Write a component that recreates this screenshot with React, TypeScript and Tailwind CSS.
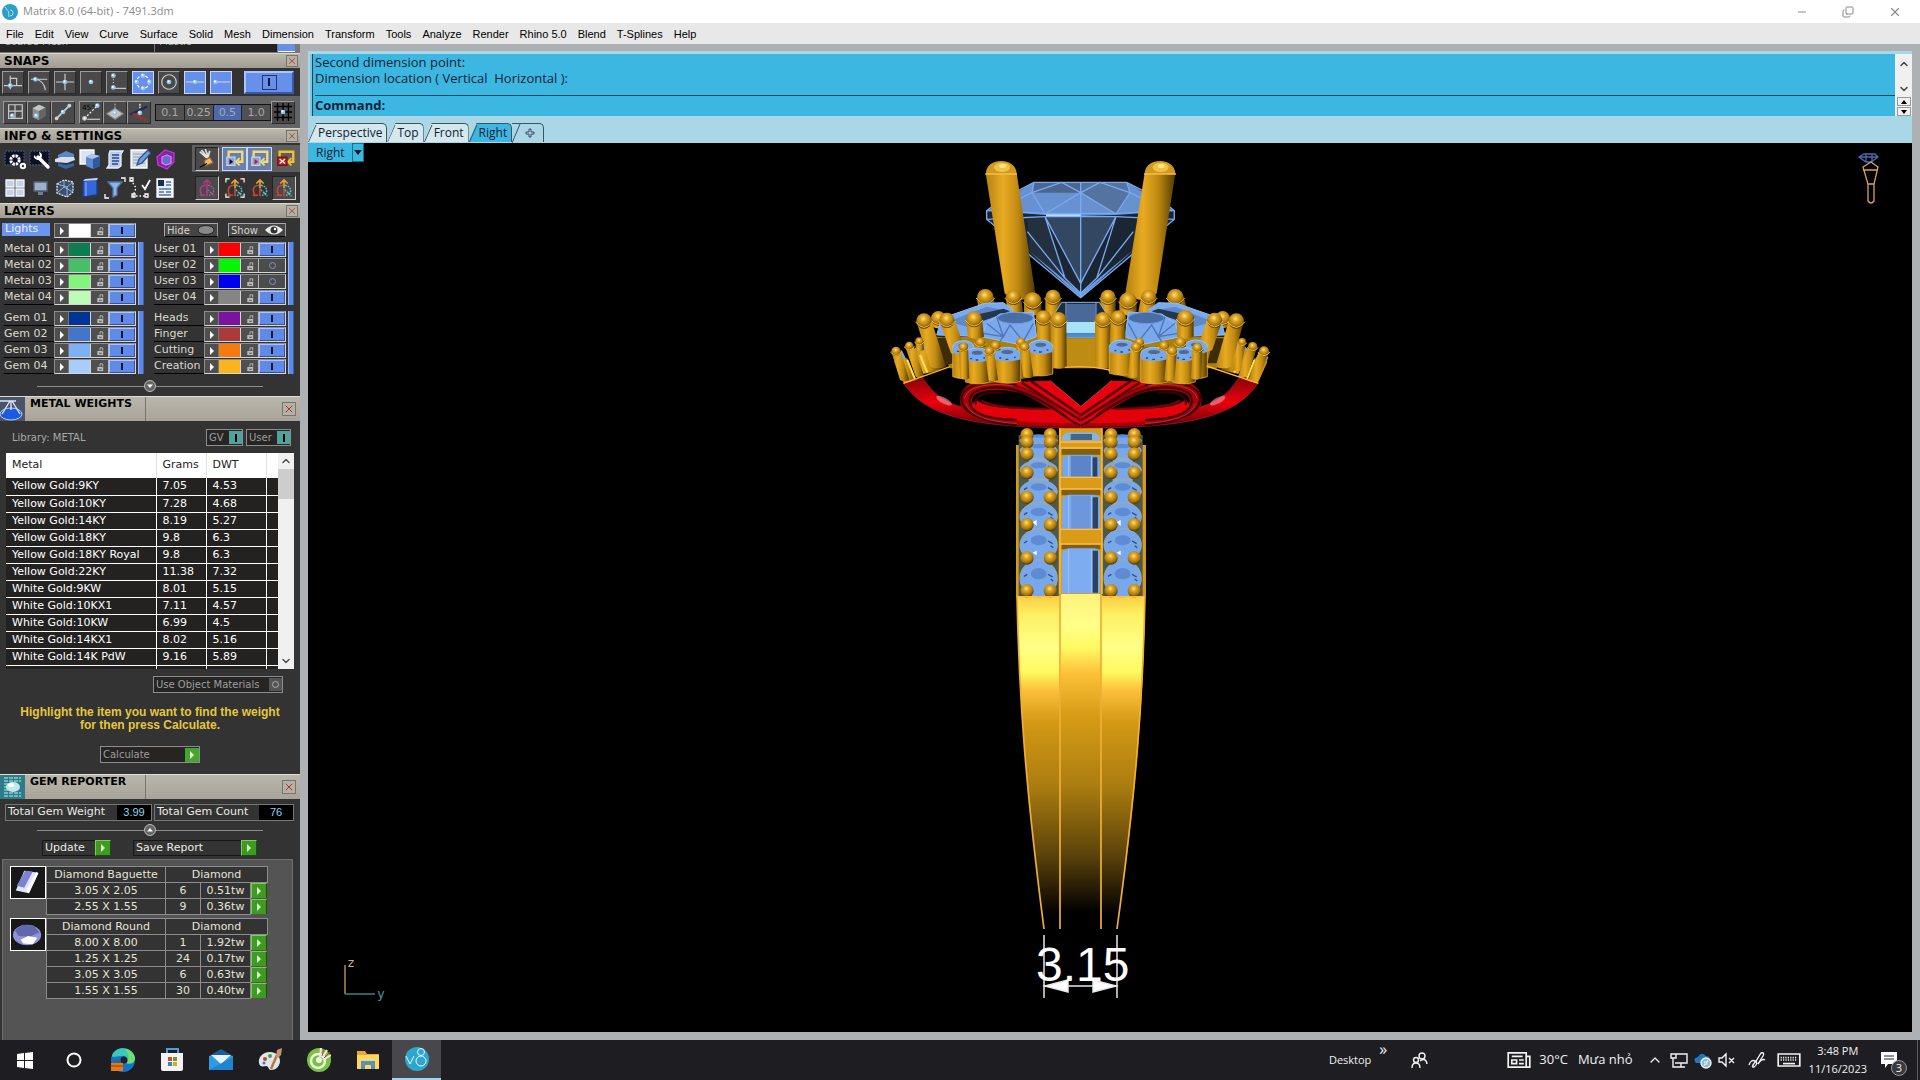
import type { ReactNode } from 'react';
import clsx from 'clsx';
import { ChevronDown, ChevronUp, Copy, Minus, X } from 'lucide-react';

const MENUS = ['File', 'Edit', 'View', 'Curve', 'Surface', 'Solid', 'Mesh', 'Dimension', 'Transform', 'Tools', 'Analyze', 'Render', 'Rhino 5.0', 'Blend', 'T-Splines', 'Help'];

const METALS = [
  ['Yellow Gold:9KY', '7.05', '4.53'],
  ['Yellow Gold:10KY', '7.28', '4.68'],
  ['Yellow Gold:14KY', '8.19', '5.27'],
  ['Yellow Gold:18KY', '9.8', '6.3'],
  ['Yellow Gold:18KY Royal', '9.8', '6.3'],
  ['Yellow Gold:22KY', '11.38', '7.32'],
  ['White Gold:9KW', '8.01', '5.15'],
  ['White Gold:10KX1', '7.11', '4.57'],
  ['White Gold:10KW', '6.99', '4.5'],
  ['White Gold:14KX1', '8.02', '5.16'],
  ['White Gold:14K PdW', '9.16', '5.89'],
  ['White Gold:14KW', '7.41', '4.77'],
];

type Layer = { name: string; color: string; on?: boolean };

const LAYER_GROUPS: Layer[][] = [
  [
    { name: 'Metal 01', color: 'bg-[#0b7d50]' },
    { name: 'Metal 02', color: 'bg-[#45c069]' },
    { name: 'Metal 03', color: 'bg-[#83f57c]' },
    { name: 'Metal 04', color: 'bg-[#bdfcb8]' },
  ],
  [
    { name: 'User 01', color: 'bg-[#fb0000]' },
    { name: 'User 02', color: 'bg-[#05f505]', on: false },
    { name: 'User 03', color: 'bg-[#0000ee]', on: false },
    { name: 'User 04', color: 'bg-[#858585]' },
  ],
  [
    { name: 'Gem 01', color: 'bg-[#003595]' },
    { name: 'Gem 02', color: 'bg-[#4276cc]' },
    { name: 'Gem 03', color: 'bg-[#7db0f5]' },
    { name: 'Gem 04', color: 'bg-[#aaccfa]' },
  ],
  [
    { name: 'Heads', color: 'bg-[#7a14a0]' },
    { name: 'Finger', color: 'bg-[#ab3b3b]' },
    { name: 'Cutting', color: 'bg-[#f57a10]' },
    { name: 'Creation', color: 'bg-[#fab41c]' },
  ],
];

const GEMS = [
  { name: 'Diamond Baguette', shape: 'baguette', rows: [['3.05 X 2.05', '6', '0.51tw'], ['2.55 X 1.55', '9', '0.36tw']] },
  { name: 'Diamond Round', shape: 'round', rows: [['8.00 X 8.00', '1', '1.92tw'], ['1.25 X 1.25', '24', '0.17tw'], ['3.05 X 3.05', '6', '0.63tw'], ['1.55 X 1.55', '30', '0.40tw']] },
];

const Dot = ({ x, y }: { x: number; y: number }) => (
  <g>
    <circle cx={x} cy={y} r="2.6" fill="#8fc3ea" stroke="none" />
    <circle cx={x - 0.6} cy={y - 0.6} r="1.2" fill="#f2faff" stroke="none" />
  </g>
);

function Icon({ children, size = 'h-5 w-5' }: { children: ReactNode; size?: string }) {
  return (
    <svg viewBox="0 0 22 22" className={clsx('shrink-0', size)} fill="none" stroke="#c9ccce" strokeWidth="1.3" aria-hidden="true">
      {children}
    </svg>
  );
}

const SNAP_TOP: { name: string; on?: boolean; icon: ReactNode }[] = [
  { name: 'Perp', icon: <><path d="M1 15H21M8 4V19M8 7h7v8" /><Dot x={8} y={15} /></> },
  { name: 'Tan', icon: <><path d="M2 8H20M7 8C14 9 17 13 18 20" /><Dot x={7} y={8} /></> },
  { name: 'Int', icon: <><path d="M1 11H21M11 2V20" /><Dot x={11} y={11} /></> },
  { name: 'Point', icon: <Dot x={11} y={11} /> },
  { name: 'Near', icon: <><path d="M5 18H21" /><Dot x={7} y={4} /><path d="M7 8v6" strokeDasharray="1 2" /><Dot x={7} y={17} /></> },
  { name: 'Quad', on: true, icon: <><circle cx="11" cy="11" r="7" stroke="#fff" strokeDasharray="3 2" /><Dot x={11} y={4} /><Dot x={4} y={11} /><Dot x={18} y={11} /><Dot x={11} y={18} /></> },
  { name: 'Cen', icon: <><circle cx="11" cy="11" r="8" /><Dot x={11} y={11} /></> },
  { name: 'Mid', on: true, icon: <><path d="M1 11H21" /><Dot x={11} y={11} /></> },
  { name: 'End', on: true, icon: <><path d="M6 11H21" /><Dot x={5} y={11} /></> },
];

const SNAP_LEFT: { name: string; icon: ReactNode }[] = [
  { name: 'Grid', icon: <><path d="M4 3h15v15H4zM11 3v15M4 10h15" /><Dot x={8} y={15} /></> },
  { name: 'Project', icon: <><path d="M4 7l7-4 7 3v9l-7 5-7-3z" fill="#8c8f8f" stroke="none" /><path d="M4 7l7-4 7 3-7 4z" fill="#c4c6c6" stroke="none" /><path d="M11 10l7-4v9l-7 5z" fill="#666" stroke="none" /><Dot x={8} y={15} /></> },
  { name: 'Line', icon: <><path d="M4 18L18 4" strokeWidth="2" /><circle cx="4" cy="18" r="1.5" fill="#ddd" /><circle cx="18" cy="4" r="1.5" fill="#ddd" /><Dot x={11} y={11} /></> },
];

const SNAP_MID: { name: string; icon: ReactNode }[] = [
  { name: '45 degrees', icon: <><path d="M4 18L18 4" strokeDasharray="2 2" stroke="#fff" /><path d="M7 19H21" /><circle cx="4" cy="18" r="2" fill="#eee" /><Dot x={18} y={4} /><text x="1" y="9" fontSize="8" fill="#000" stroke="none" fontFamily="DejaVu Sans">45°</text></> },
  { name: 'Planar', icon: <><path d="M2 13l9-6 9 6-9 6z" fill="#c4c6c6" stroke="#888" /><path d="M11 7v-6" strokeDasharray="1 1" /><Dot x={11} y={12} /></> },
  { name: 'Gumball', icon: <><path d="M12 13V2" stroke="#fff" strokeDasharray="2 1" /><path d="M1 14L20 5" stroke="#1c2b58" strokeWidth="2.5" /><path d="M4 13l15 7" stroke="#a32d2d" strokeWidth="2.5" /><Dot x={12} y={12} /></> },
];

const INFO_A: { name: string; icon: ReactNode }[] = [
  { name: 'Options', icon: <><path d="M1 3h19v14H1z" fill="#0c1020" stroke="#3a4f78" strokeDasharray="2 1" /><circle cx="11" cy="12" r="4.2" stroke="#fff" strokeWidth="3" strokeDasharray="2.4 .9" /><circle cx="19" cy="18" r="2.2" stroke="#fff" strokeWidth="2" /></> },
  { name: 'Tools', icon: <><path d="M1 3h19v14H1z" fill="#0c1020" stroke="#3a4f78" strokeDasharray="2 1" /><path d="M9 9L19 19" stroke="#fff" strokeWidth="3.4" strokeLinecap="round" /><path d="M5 7a4 4 0 1 0 5-3l1 4-3 2z" fill="#fff" stroke="none" /></> },
  { name: 'Slice', icon: <><path d="M4 7l8-4 8 3v4l-8 3-8-3z" fill="#5c85c4" stroke="none" /><path d="M1 11l6-2h13l1 3-8 3-12-1z" fill="#d4e0f0" stroke="none" /><path d="M4 15l8 2 8-2v3l-8 3-8-3z" fill="#3a62a8" stroke="none" /></> },
  { name: 'Box', icon: <><path d="M1 2h14v14H1z" fill="#dde4f0" stroke="#fff" /><path d="M7 9l6-3 8 2v10l-7 3-7-3z" fill="#5b8ad0" stroke="none" /><path d="M7 9l6-3 8 2-7 3z" fill="#a9c8f0" stroke="none" /><path d="M14 11l7-3v10l-7 3z" fill="#2f5aa0" stroke="none" /></> },
  { name: 'Script', icon: <><path d="M6 3h13l-2 3v12l-3 2H3l2-3V6z" fill="#b8cdec" stroke="#e8f0fc" /><path d="M8 7h7M8 10h7M8 13h7M8 16h6" stroke="#274a86" /></> },
  { name: 'Notes', icon: <><path d="M2 2h16v18H2z" fill="#d6deea" stroke="#fff" /><path d="M4 6h12M4 9h12M4 12h12M4 15h12" stroke="#7d8fae" strokeWidth=".8" /><path d="M8 17l2-6 9-9 3 3-9 10z" fill="#6c9ddd" stroke="#2d4f85" /></> },
  { name: 'Render cube', icon: <><path d="M3 9l8-7 9 3v9l-7 7-9-4z" fill="#8a1ea6" stroke="#b83ccf" /><path d="M8 9l5-2 4 2v6l-5 2-4-2z" fill="#6a6ad0" stroke="#c58ae6" /></> },
];

const INFO_B: { name: string; icon: ReactNode }[] = [
  { name: 'Viewports', icon: <><path d="M2 3h8v7H2zM12 3h8v7h-8zM2 12h8v7H2zM12 12h8v7h-8z" fill="#c4d2e8" stroke="#f3f6fb" /></> },
  { name: 'Monitor', icon: <><path d="M5 5h13v9H5z" fill="#9eb0c8" stroke="#52627c" /><path d="M9 15h5v3H9z" fill="#6f7f98" stroke="none" /></> },
  { name: 'Mesh cube', icon: <><path d="M3 7l7-4 9 2v10l-6 5-10-4z" fill="#3b506e" stroke="#dceaff" strokeDasharray="2 1" /><path d="M3 7l10 3 6-5M13 10v10M3 16l7-6 9 5M10 3v7" stroke="#a8c8f0" strokeWidth=".8" /></> },
  { name: 'Library', icon: <><path d="M4 4l14-2v16L4 20z" fill="#3467d8" stroke="#1c3b90" /><path d="M4 4l2-2 13-1-1 2z" fill="#cdd9f5" stroke="none" /><path d="M7 5v14" stroke="#7ea2f3" /></> },
  { name: 'Filter', icon: <><path d="M4 5h14l-5 6v7l-4 2v-9z" fill="#8db4e8" stroke="#4e76ac" /><path d="M17 1h4v4M1 17v4h4" stroke="#fff" /></> },
  { name: 'Check', icon: <><path d="M2 3l5 8-3 8h12" stroke="#fff" strokeDasharray="1.5 2" /><path d="M1 1h3v3H1zM3 17h3v3H3zM16 17h3v3h-3z" stroke="#fff" /><path d="M13 8l3 4 5-9" stroke="#fff" strokeWidth="1.8" /></> },
  { name: 'Report', icon: <><path d="M3 2h16v18H3z" fill="#e8eef8" stroke="#fff" /><path d="M4 3h6v6H4z" fill="#1a2c50" stroke="none" /><path d="M12 5h5M12 8h5M5 12h12M5 15h5M12 15h5M5 18h12" stroke="#5473a8" strokeWidth="1.6" /></> },
];

const TREE_ICON = (a: string, b: string, c: string) => (
  <>
    <path d="M11 11V3M7 6l4-4 4 4" stroke={a} strokeWidth="1.8" />
    <path d="M10 8C3 8 2 14 6 20M3 19h6M11 11v9" stroke={b} strokeWidth="1.8" />
    <path d="M12 8c7 1 8 7 4 11M12 13l7 7M19 14l-6 6" stroke={c} strokeWidth="1.5" strokeDasharray="2 1" />
  </>
);
const FRAME_ICON = (color: string, fill: string) => (
  <>
    <path d="M4 9V3h15v11h-5" stroke="#f0df70" strokeWidth="2.6" />
    <path d="M16 10l-4 4 4 4" stroke="#f0df70" strokeWidth="2" />
    <path d="M2 9h9v9H2z" fill={fill} stroke="#c9d4ee" />
    <path d="M5 11l4 3-4 3z" fill={color} stroke="none" />
  </>
);

function Close({ small }: { small?: boolean }) {
  return (
    <button aria-label="Close panel" className={clsx('flex items-center justify-center border border-[#77746c] bg-[#b5b1a7]', small ? 'h-3 w-3' : 'h-[14px] w-[14px]')}>
      <X className="h-3 w-3 text-[#a83a30]" strokeWidth={2} />
    </button>
  );
}

function Header({ title }: { title: string }) {
  return (
    <header className="flex h-[15px] items-center justify-between border-t border-[#d8d5cb] bg-linear-to-b from-[#bcb8ad] to-[#a09c91] pr-0.5 pl-1">
      <h2 className="text-[12px] leading-[14px] font-bold text-black">{title}</h2>
      <Close small />
    </header>
  );
}

function BigHeader({ title, children }: { title: string; children: ReactNode }) {
  return (
    <header className="flex h-[25px] items-stretch border-t border-[#e0ddd5] bg-linear-to-b from-[#b9b6ac] to-[#a8a49a]">
      {children}
      <h2 className="w-[121px] border-r border-[#77746c] pl-[5px] text-[11px] leading-[13px] font-bold text-black">{title}</h2>
      <div className="flex flex-1 items-center justify-end pr-1"><Close /></div>
    </header>
  );
}

function SnapButton({ name, on, children, wide }: { name: string; on?: boolean; children: ReactNode; wide?: boolean }) {
  return (
    <button
      aria-label={name}
      aria-pressed={!!on}
      className={clsx(
        'flex h-[23px] items-center justify-center border',
        wide ? 'w-[24px]' : 'w-[22px]',
        on ? 'border-[#c4d8ff] bg-[#6690ea]' : 'border-t-[#9b9b9b] border-r-[#2a2a2a] border-b-[#2a2a2a] border-l-[#9b9b9b] bg-[#4a4a4a]'
      )}
    >
      {children}
    </button>
  );
}

function PlayGreen() {
  return (
    <span className="flex h-4 w-4 shrink-0 items-center justify-center border border-t-[#7fc866] border-r-[#1b4d0c] border-b-[#1b4d0c] border-l-[#7fc866] bg-[#3f9a22]">
      <svg viewBox="0 0 8 8" className="h-2 w-2" aria-hidden="true"><path d="M2 0l4 4-4 4z" fill="#d8ffc8" /></svg>
    </span>
  );
}

function LayerControls({ layer }: { layer: Layer }) {
  const on = layer.on !== false;
  return (
    <div className="flex h-[15px] w-[82px] border border-t-[#8d8d8d] border-r-[#d5d5d5] border-b-[#d5d5d5] border-l-[#8d8d8d] bg-[#4f4f4f]">
      <button aria-label={`Expand ${layer.name}`} className="flex w-[14px] items-center justify-center border-r border-[#777]">
        <svg viewBox="0 0 6 8" className="h-2 w-1.5" aria-hidden="true"><path d="M1 0l4 4-4 4z" fill="#fff" /></svg>
      </button>
      <button aria-label={`${layer.name} colour`} className={clsx('w-[22px] border-r border-[#d5d5d5]', layer.color)} />
      <button aria-label={`Lock ${layer.name}`} className="flex w-[18px] items-center justify-center border-r border-[#b5b5b5]">
        <svg viewBox="0 0 10 11" className="h-2.5 w-2.5" aria-hidden="true">
          <path d="M2 5.500h6.500v4.500H2z" fill="#bcbcbc" />
          <path d="M5 5V2h3v3" fill="none" stroke="#bcbcbc" />
          <path d="M4 8h3" stroke="#444" />
        </svg>
      </button>
      <button aria-label={`Show ${layer.name}`} aria-pressed={on} className={clsx('flex flex-1 items-center justify-center', on ? 'border border-t-[#aac4ff] border-r-[#37539c] border-b-[#37539c] border-l-[#aac4ff] bg-[#6189e6]' : 'bg-[#4c4c4c]')}>
        {on ? <span className="h-[7px] w-0.5 bg-[#0d1733]" /> : <span className="h-[7px] w-[7px] rounded-full border border-[#7c95c4]" />}
      </button>
    </div>
  );
}

function LayerGroup({ layers }: { layers: Layer[] }) {
  return (
    <div className="flex w-[142px]">
      <ul className="flex flex-col gap-px">
        {layers.map((layer) => (
          <li key={layer.name} className="flex">
            <span className="h-[15px] w-[50px] border-b border-black text-[11px] leading-[13px] whitespace-nowrap text-[#dcd9cf]">{layer.name}</span>
            <LayerControls layer={layer} />
          </li>
        ))}
      </ul>
      <div className="ml-0.5 w-1.5 border-r border-l border-r-[#3d5fb4] border-l-[#9bb8f6] bg-[#5f87e4]" />
    </div>
  );
}

function Fold({ up }: { up?: boolean }) {
  return (
    <div className="flex items-center px-[37px]">
      <div className="h-px flex-1 bg-[#8d8d8d]" />
      <button aria-label={up ? 'Collapse' : 'Expand'} className="flex h-3 w-3 items-center justify-center rounded-full border border-[#bbb] bg-[#666]">
        <svg viewBox="0 0 8 8" className="h-2 w-2" aria-hidden="true"><path d={up ? 'M1 5.500L4 2l3 3.500z' : 'M1 2.500L4 6l3-3.500z'} fill="#fff" /></svg>
      </button>
      <div className="h-px flex-1 bg-[#8d8d8d]" />
    </div>
  );
}

function IconRow({ items }: { items: { name: string; icon: ReactNode }[] }) {
  return (
    <div className="flex w-[192px] gap-px pl-[3px]">
      {items.map((item) => (
        <button key={item.name} aria-label={item.name} className="flex h-6 w-6 items-center justify-center">
          <Icon size="h-[22px] w-[22px]">{item.icon}</Icon>
        </button>
      ))}
    </div>
  );
}

function InfoSettings() {
  const framed = 'flex h-6 w-6 items-center justify-center border border-t-[#222] border-r-[#ccc] border-b-[#ccc] border-l-[#222] bg-[#4a4a4a]';
  const lit = 'flex h-6 w-[25px] items-center justify-center border border-[#c4d8ff] bg-[#6a7fae]';
  return (
    <div className="flex flex-col gap-[2px] bg-[#333] pt-[2px] pb-[2px]">
      <div className="flex items-center">
        <IconRow items={INFO_A} />
        <div className="flex h-[27px] flex-1 items-center bg-[#5e5e5e] pl-[3px]">
          <button aria-label="Clean" className={framed}>
            <Icon><path d="M3 3l8 7M5 1l7 9M9 0l4 10M14 2l-2 8" stroke="#e4e4e4" strokeWidth="1.8" /><path d="M8 13l6-4 4 6-9 4z" fill="#e8b873" stroke="#8c5d28" /><path d="M3 20l8-4" stroke="#000" /></Icon>
          </button>
          <button aria-label="Play frame" className={clsx(lit, 'ml-[3px]')}><Icon>{FRAME_ICON('#111', '#8fa3d0')}</Icon></button>
          <button aria-label="Record frame" className={lit}><Icon>{FRAME_ICON('#c02020', '#8fa3d0')}</Icon></button>
          <button aria-label="Delete frame" className="ml-0.5 flex h-6 w-[23px] items-center justify-center">
            <Icon><path d="M4 9V3h15v11h-5" stroke="#f0c030" strokeWidth="2.6" /><path d="M17 10l-4 4 4 4" stroke="#f0c030" strokeWidth="2" /><path d="M2 9h10v9H2z" fill="#b82020" stroke="#701010" /><path d="M4 11l6 5M10 11l-6 5" stroke="#fff" /></Icon>
          </button>
        </div>
      </div>
      <div className="flex items-center">
        <IconRow items={INFO_B} />
        <div className="flex h-[27px] flex-1 items-center pl-[3px]">
          <button aria-label="Builder one" className={framed}><Icon>{TREE_ICON('#a83a80', '#b03a88', '#a55a90')}</Icon></button>
          <button aria-label="Builder two" className="ml-[3px] flex h-6 w-[25px] items-center justify-center"><Icon>{TREE_ICON('#e8a23c', '#cc4236', '#58c0c8')}<path d="M1 5V1h4M17 1h4v4M1 17v4h4M17 21h4v-4" stroke="#fff" /></Icon></button>
          <button aria-label="Builder three" className="flex h-6 w-[25px] items-center justify-center"><Icon>{TREE_ICON('#e8a23c', '#cc4236', '#58c0c8')}</Icon></button>
          <button aria-label="Builder four" className={framed}><Icon>{TREE_ICON('#e8a23c', '#cc4236', '#58c0c8')}</Icon></button>
        </div>
      </div>
    </div>
  );
}

function MetalWeights() {
  const box = 'flex h-[17px] items-center border border-[#8d8d8d] bg-[#262524] text-[10px] text-[#9d9d9d]';
  return (
    <section>
      <BigHeader title="METAL WEIGHTS">
        <svg viewBox="0 0 25 24" className="w-[25px] bg-[#2a3244]" aria-hidden="true">
          <path d="M0 0h25v24H0z" fill="#4a5468" />
          <ellipse cx="11" cy="17" rx="11" ry="6" fill="#1c5ae0" stroke="#b7cdf8" />
          <path d="M0 4l16 0M10 4L2 17M12 4l8 13M11 4v9" stroke="#dbe6fa" strokeWidth="1.4" />
        </svg>
      </BigHeader>
      <div className="flex items-center gap-[3px] pt-2 pr-[9px] pl-3">
        <p className="flex-1 text-[10px] leading-[17px] text-[#a9a9a9]">Library: METAL</p>
        <button className={clsx(box, 'w-[37px] justify-between pl-0.5')}>GV<span className="flex h-[13px] w-[13px] items-center justify-center bg-[#4fa39c]"><i className="h-2 w-0.5 bg-black" /></span></button>
        <button className={clsx(box, 'w-[45px] justify-between pl-0.5')}>User<span className="flex h-[13px] w-[13px] items-center justify-center bg-[#4fa39c]"><i className="h-2 w-0.5 bg-black" /></span></button>
      </div>
      <div className="mx-1.5 mt-[7px] flex h-[216px] overflow-hidden">
        <table className="w-[272px] table-fixed border-collapse self-start text-left text-[11px] text-white">
          <thead>
            <tr className="h-[25px] bg-white text-[#222]">
              <th className="w-[150px] border-r border-[#e2e2e2] pl-1.5 font-normal">Metal</th>
              <th className="w-[50px] border-r border-[#e2e2e2] pl-1.5 font-normal">Grams</th>
              <th className="w-[60px] border-r border-[#e2e2e2] pl-1.5 font-normal">DWT</th>
              <th />
            </tr>
          </thead>
          <tbody>
            {METALS.map((row) => (
              <tr key={row[0]} className="h-[17px] border-b border-white bg-[#232221]">
                {row.map((cell, i) => (
                  <td key={i} className="border-r border-white pl-1.5 leading-4 whitespace-nowrap">{cell}</td>
                ))}
                <td />
              </tr>
            ))}
          </tbody>
        </table>
        <div className="flex flex-1 flex-col items-center bg-[#f0f0f0]">
          <ChevronUp className="my-0.5 h-3 w-3 text-[#505050]" strokeWidth={3} />
          <div className="h-[30px] w-full bg-[#cdcdcd]" />
          <ChevronDown className="mt-auto mb-0.5 h-3 w-3 text-[#505050]" strokeWidth={3} />
        </div>
      </div>
      <div className="flex flex-col">
        <button className={clsx(box, 'mt-[7px] mr-[17px] w-[130px] justify-between self-end pl-0.5')}>
          Use Object Materials
          <span className="flex h-[13px] w-[13px] items-center justify-center bg-[#555]"><i className="h-[7px] w-[7px] rounded-full border border-[#aaa]" /></span>
        </button>
        <p className="mt-[13px] text-center font-['Liberation_Sans'] text-[12px] leading-[13px] font-bold text-[#e6c73c]">
          Highlight the item you want to find the weight<br />for then press Calculate.
        </p>
        <button className={clsx(box, 'mt-[14px] w-[100px] justify-between self-center pl-0.5')}>
          Calculate
          <span className="flex h-[14px] w-[14px] items-center justify-center bg-[#46a62c]"><svg viewBox="0 0 8 8" className="h-2 w-2" aria-hidden="true"><path d="M2 0l4 4-4 4z" fill="#e8ffe0" /></svg></span>
        </button>
      </div>
    </section>
  );
}

function GemReporter() {
  const cell = 'border border-[#8d8d8d] bg-[#333] leading-[15px]';
  const total = "ml-auto h-full w-[34px] bg-black text-center font-['Liberation_Sans'] leading-[15px] text-[#8fd6ee]";
  return (
    <section className="mt-[11px] flex flex-1 flex-col">
      <BigHeader title="GEM REPORTER">
        <svg viewBox="0 0 25 24" className="w-[25px] bg-[#2f7b88]" aria-hidden="true">
          <path d="M4 3h17M4 6h17M4 18h17M4 21h17M4 9h4M4 12h3M4 15h4" stroke="#b9f2f0" strokeDasharray="4 1" />
          <ellipse cx="13" cy="12" rx="7" ry="5" fill="#bfe9ec" />
          <ellipse cx="11" cy="10" rx="3" ry="2" fill="#fff" />
        </svg>
      </BigHeader>
      <div className="mt-[5px] flex justify-between pr-1.5 pl-[5px] text-[11px] text-[#eceae2]">
        <p className="flex h-[17px] w-[147px] items-center border border-[#777] pl-0.5 whitespace-nowrap">Total Gem Weight<output className={total}>3.99</output></p>
        <p className="flex h-[17px] w-[140px] items-center border border-[#777] pl-0.5 whitespace-nowrap">Total Gem Count<output className={total}>76</output></p>
      </div>
      <div className="mt-[3px]"><Fold up /></div>
      <div className="mt-1 flex gap-[22px] pl-[42px] text-[11px] text-[#eceae2]">
        <button className="flex h-4 w-[69px] items-center justify-between border border-r-0 border-[#161616] pl-0.5">Update<PlayGreen /></button>
        <button className="flex h-4 w-[124px] items-center justify-between border border-r-0 border-[#161616] pl-0.5">Save Report<PlayGreen /></button>
      </div>
      <div className="mt-[3px] mr-[7px] ml-0.5 flex flex-1 flex-col gap-[3px] border border-b-0 border-[#6e6e6e] bg-[#545454] px-[7px] pt-[6px]">
        {GEMS.map((gem) => (
          <div key={gem.name} className="flex items-start">
            <svg viewBox="0 0 36 33" className="h-[33px] w-[36px] shrink-0 border border-white bg-[#181818]" aria-hidden="true">
              {gem.shape === 'baguette' ? (
                <g><path d="M14 4l15 2-10 22-14-3z" fill="#dfe4fb" /><path d="M15 4l8 1-9 17-8-2z" fill="#7d83d4" /><path d="M19 28l10-21-2-2-11 20z" fill="#fff" /></g>
              ) : (
                <g><ellipse cx="17" cy="17" rx="15" ry="11" fill="#8e93d8" /><path d="M4 12l8-6 12 1 6 7-10 5-12-1z" fill="#6167ac" /><path d="M10 22l8-4 10 2-5 7-10-1z" fill="#fff" /></g>
              )}
            </svg>
            <table className="w-[221px] table-fixed border-collapse text-center text-[11px] text-[#e6e3d8]">
              <colgroup>
                <col className="w-[119px]" />
                <col className="w-[35px]" />
                <col className="w-[50px]" />
                <col className="w-[17px]" />
              </colgroup>
              <thead>
                <tr className="h-4">
                  <th className={clsx(cell, 'font-normal whitespace-nowrap')}>{gem.name}</th>
                  <th colSpan={3} className={clsx(cell, 'font-normal')}>Diamond</th>
                </tr>
              </thead>
              <tbody>
                {gem.rows.map((row) => (
                  <tr key={row[0]} className="h-4">
                    <td className={cell}>{row[0]}</td>
                    <td className={cell}>{row[1]}</td>
                    <td className={clsx(cell, 'whitespace-nowrap')}>{row[2]}</td>
                    <td className="p-0"><button aria-label={`Select ${row[0]}`} className="flex h-[15px] overflow-hidden"><PlayGreen /></button></td>
                  </tr>
                ))}
              </tbody>
            </table>
          </div>
        ))}
      </div>
    </section>
  );
}

function Sidebar() {
  return (
    <aside className="flex w-[300px] shrink-0 flex-col bg-[#333] font-['DejaVu_Sans',sans-serif]">
      <div className="flex h-2 items-end gap-px overflow-hidden bg-[#777] text-[10px] leading-3 text-[#aaa]">
        <span className="h-4 w-[154px] bg-[#222] pl-1">Coarse Mesh</span>
        <span className="h-4 w-[122px] bg-[#222] pl-1">Plastic</span>
        <span className="h-4 w-[17px] border-b border-white bg-[#6690ea]" />
      </div>
      <div className="h-px bg-[#777]" />
      <Header title="SNAPS" />
      <div className="flex h-[28px] items-center gap-1 px-0.5">
        {SNAP_TOP.map((s) => (
          <SnapButton key={s.name} name={s.name} on={s.on}><Icon>{s.icon}</Icon></SnapButton>
        ))}
        <button aria-label="All snaps" className="ml-2 flex h-[23px] w-[50px] items-center justify-center border-2 border-t-[#a9c4ff] border-r-[#3858a8] border-b-[#3858a8] border-l-[#a9c4ff] bg-[#6690ea]">
          <span className="flex h-[15px] w-[15px] items-center justify-center border border-[#24386e]"><i className="h-2 w-0.5 bg-[#0d1733]" /></span>
        </button>
      </div>
      <div className="flex h-[32px] items-center bg-[#646464] pl-[3px]">
        {SNAP_LEFT.map((s) => <SnapButton key={s.name} name={s.name} wide><Icon>{s.icon}</Icon></SnapButton>)}
        <div className="w-1" />
        {SNAP_MID.map((s) => <SnapButton key={s.name} name={s.name} wide><Icon>{s.icon}</Icon></SnapButton>)}
        <div className="ml-[4px] flex h-[17px] w-[116px] border border-r-0 border-[#111] text-[11px] text-[#a8a8a8]">
          {['0.1', '0.25', '0.5', '1.0'].map((v) => (
            <button key={v} className={clsx('flex-1 border-r border-[#222] leading-[15px]', v === '0.5' ? 'bg-[#4d68ac]' : 'bg-[#515151]')}>{v}</button>
          ))}
        </div>
        <SnapButton name="Grid snap" wide><Icon><path d="M5 1v20M11 1v20M17 1v20M1 5h20M1 11h20M1 17h20" stroke="#000" strokeWidth="1.500" /><Dot x={11} y={11} /></Icon></SnapButton>
      </div>
      <Header title="INFO & SETTINGS" />
      <InfoSettings />
      <Header title="LAYERS" />
      <div className="mt-[5px] flex h-[15px] pl-0.5 text-[11px]">
        <span className="mr-1 h-[13px] w-12 bg-[#6b95ee] pl-[3px] leading-3 text-[#e8efff]">Lights</span>
        <LayerControls layer={{ name: 'Lights', color: 'bg-white' }} />
        <div className="flex gap-2.5 pl-7 text-[10px] text-[#d8d5cc]">
          <button className="flex h-[14px] w-[54px] items-center justify-between border border-t-[#aaa] border-r-[#999] border-b-black border-l-[#aaa] bg-[#454545] pr-0.5 pl-0.5">
            Hide
            <svg viewBox="0 0 18 10" className="h-2.5 w-[18px]" aria-hidden="true"><ellipse cx="9" cy="5" rx="8" ry="4.500" fill="#888" stroke="#222" /></svg>
          </button>
          <button className="flex h-[14px] w-[58px] items-center justify-between border border-t-[#aaa] border-r-[#999] border-b-black border-l-[#aaa] bg-[#454545] pr-0.5 pl-0.5">
            Show
            <svg viewBox="0 0 18 10" className="h-2.5 w-[18px]" aria-hidden="true"><path d="M0 5Q9-4 18 5Q9 14 0 5z" fill="#eee" /><circle cx="9" cy="5" r="3.500" fill="#333" /><circle cx="10" cy="4" r="1.200" fill="#fff" /></svg>
          </button>
        </div>
      </div>
      <div className="mt-1 grid grid-cols-[150px_150px] gap-y-[6px] pl-1">
        {LAYER_GROUPS.map((group) => <LayerGroup key={group[0].name} layers={group} />)}
      </div>
      <div className="mt-1.5 mb-1"><Fold /></div>
      <MetalWeights />
      <GemReporter />
    </aside>
  );
}

/* ---------- ring model ---------- */

type PinProps = { x: number; y: number; bx: number; by: number; r: number };

// Bead on top, shaft running down to (bx, by)
function Pin({ x, y, bx, by, r }: PinProps) {
  return (
    <g>
      <path d={`M${x - r} ${y}L${bx - r} ${by}Q${bx} ${by + r / 2} ${bx + r} ${by}L${x + r} ${y}z`} fill="url(#shaft)" />
      <circle cx={x} cy={y} r={r} fill="url(#bead)" />
      <path d={`M${x - r - 3} ${y + 2}Q${x} ${y + r * 1.6} ${x + r + 3} ${y + 2}`} fill="none" stroke="#f5b53c" strokeWidth="3" />
    </g>
  );
}

function Cup({ x, y, w, h }: { x: number; y: number; w: number; h: number }) {
  return (
    <g>
      <path d={`M${x - w} ${y}V${y + h}Q${x} ${y + h + 12} ${x + w} ${y + h}V${y}z`} fill="url(#shaft)" stroke="#f5b53c" strokeWidth="2" />
      <ellipse cx={x} cy={y} rx={w} ry="20" fill="#79a8ea" stroke="#9cc6f5" strokeWidth="3" />
      <path d={`M${x - w} ${y}V${y + 16}Q${x} ${y + 28} ${x + w} ${y + 16}V${y}`} fill="#79a8ea" />
      <ellipse cx={x} cy={y - 6} rx={w * 0.45} ry="6" fill="#4a6a9c" />
      <path d={`M${x - w * 0.6} ${y + 12}h6M${x - 5} ${y + 16}h8M${x + w * 0.5} ${y + 10}h5`} stroke="#2d4775" strokeWidth="4" />
    </g>
  );
}

const BACK_PINS: PinProps[] = [
  { x: 346, y: 442, bx: 350, by: 475, r: 25 },
  { x: 430, y: 442, bx: 436, by: 485, r: 23 },
  { x: 549, y: 442, bx: 549, by: 500, r: 23 },
  { x: 488, y: 453, bx: 488, by: 490, r: 26 },
  { x: 714, y: 442, bx: 714, by: 500, r: 23 },
  { x: 774, y: 453, bx: 774, by: 490, r: 26 },
  { x: 836, y: 442, bx: 828, by: 485, r: 23 },
  { x: 916, y: 442, bx: 926, by: 475, r: 25 },
  { x: 205, y: 505, bx: 208, by: 530, r: 22 },
  { x: 1058, y: 505, bx: 1054, by: 530, r: 22 },
];

const FRONT_PINS: PinProps[] = [
  { x: 162, y: 513, bx: 205, by: 650, r: 23 },
  { x: 231, y: 511, bx: 266, by: 610, r: 23 },
  { x: 312, y: 508, bx: 318, by: 560, r: 24 },
  { x: 520, y: 504, bx: 526, by: 590, r: 23 },
  { x: 565, y: 510, bx: 566, by: 650, r: 24 },
  { x: 699, y: 510, bx: 699, by: 650, r: 24 },
  { x: 745, y: 504, bx: 742, by: 580, r: 23 },
  { x: 946, y: 505, bx: 946, by: 560, r: 25 },
  { x: 1034, y: 511, bx: 1004, by: 600, r: 23 },
  { x: 1099, y: 513, bx: 1060, by: 650, r: 23 },
];

const SMALL_PINS: PinProps[] = [
  { x: 78, y: 604, bx: 104, by: 690, r: 14 },
  { x: 118, y: 588, bx: 150, by: 680, r: 13 },
  { x: 148, y: 574, bx: 150, by: 600, r: 12 },
  { x: 280, y: 592, bx: 284, by: 685, r: 14 },
  { x: 331, y: 578, bx: 331, by: 590, r: 15 },
  { x: 376, y: 588, bx: 376, by: 600, r: 15 },
  { x: 358, y: 604, bx: 370, by: 690, r: 14 },
  { x: 452, y: 577, bx: 452, by: 600, r: 14 },
  { x: 463, y: 592, bx: 475, by: 680, r: 15 },
  { x: 808, y: 577, bx: 808, by: 590, r: 14 },
  { x: 798, y: 592, bx: 788, by: 680, r: 15 },
  { x: 882, y: 588, bx: 882, by: 600, r: 15 },
  { x: 906, y: 604, bx: 898, by: 690, r: 15 },
  { x: 931, y: 578, bx: 931, by: 590, r: 16 },
  { x: 982, y: 594, bx: 978, by: 685, r: 15 },
  { x: 1116, y: 576, bx: 1100, by: 660, r: 12 },
  { x: 1148, y: 590, bx: 1118, by: 680, r: 14 },
  { x: 1182, y: 604, bx: 1152, by: 690, r: 15 },
];

function RedGallery() {
  const half = (
    <g fill="none">
      <path d="M100 698C170 808 330 834 633 834V806C520 806 400 800 300 778C230 762 190 735 160 685z" fill="url(#red)" stroke="#8f2a30" strokeWidth="2" />
      <ellipse cx="222" cy="752" rx="26" ry="9" transform="rotate(28 222 752)" fill="#ff9a9a" opacity=".6" />
      <path d="M632 812C540 760 490 712 420 704C340 696 288 712 288 752C288 800 400 812 632 812" stroke="#a60008" strokeWidth="36" />
      <path d="M320 745C326 722 400 722 440 738C480 754 510 768 528 778C450 776 380 774 345 752z" fill="#000" />
      <path d="M318 748C345 776 420 778 560 778L628 818C450 824 330 806 304 768z" fill="#e2000a" />
      <path d="M335 752C365 772 440 776 528 776" stroke="#7a0008" strokeWidth="6" />
      <path d="M274 745C280 700 370 685 440 705C520 730 570 780 632 826M300 760C292 720 350 705 420 716C500 732 560 785 620 822M318 765C312 735 350 722 400 728M274 745C276 790 340 818 440 826M300 760C310 796 360 806 440 810" stroke="#3c0004" strokeWidth="6" />
      <path d="M284 745C292 708 360 696 430 708M288 760C300 800 360 816 440 820" stroke="#b0505a" strokeWidth="2" />
      <path d="M440 695L540 692L633 770V824L600 806C560 770 500 724 440 705z" fill="#e8000e" />
      <path d="M484 694L633 796M455 698L633 812" stroke="#58000a" strokeWidth="8" />
      <path d="M540 692L633 770" stroke="#b34048" strokeWidth="3" />
    </g>
  );
  return (
    <g>
      {half}
      <g transform="matrix(-1 0 0 1 1265 0)">{half}</g>
    </g>
  );
}

function CenterStone() {
  return (
    <g strokeLinejoin="round">
      <path d="M492 97H770L875 150L913 182V208L632 443L350 208V182L390 150z" fill="#1b2634" />
      <path d="M492 97H770L913 182L738 195L632 198L525 195L350 182z" fill="#6791d0" />
      <path d="M632 97H770L780 128L738 192L632 128z" fill="#55739f" />
      <path d="M492 97H632V128L486 128z" fill="#4c678f" />
      <path d="M525 200H738L632 400z" fill="#334762" />
      <path d="M472 205L525 200L600 410L480 310z" fill="#22303f" />
      <path d="M480 305L632 430L790 300L632 443z" fill="#6b9be4" />
      <g fill="none" stroke="#79a9f0" strokeWidth="4">
        <path d="M492 97H770L875 150L913 182V208L632 443L350 208V182L390 150z" />
        <path d="M492 97L486 128L525 192L632 128L738 192L780 128L770 97M486 128L575 97L632 128L690 97L780 128M486 128L390 175M780 128L875 175M632 97V443" />
        <path d="M350 182L525 190H738L913 182M350 208L525 200H738L913 208" />
        <path d="M525 200L585 385M525 200L632 400L738 200L680 385M472 245L585 385L632 430L680 385L790 245" />
      </g>
      <path d="M528 196H632" stroke="#b6dcff" strokeWidth="6" />
    </g>
  );
}

function SideStones() {
  const half = (
    <g>
      <path d="M200 555L215 505L345 460L400 458L430 480L340 560z" fill="#7aa9ec" stroke="#8fbcf5" strokeWidth="3" />
      <path d="M235 515L350 470L415 482L290 530z" fill="#6089c8" />
      <path d="M290 500L400 476L420 484L320 520z" fill="#26364c" />
      <path d="M335 560L350 520L390 492L490 486L500 560L440 582z" fill="#79a8ec" stroke="#96c0f6" strokeWidth="3" />
      <ellipse cx="436" cy="504" rx="54" ry="17" fill="#4a6da6" stroke="#6d9de4" strokeWidth="3" />
      <path d="M350 520L400 560L420 525L460 575L490 520M380 500L400 560L340 550M420 525L390 575" fill="none" stroke="#4e77b4" strokeWidth="4" />
      <path d="M130 600L150 580L190 585L185 610z" fill="#7aa9ec" />
      <path d="M128 600L190 600L212 660L160 672z" fill="url(#shaft)" />
      <path d="M70 622L95 600L110 630L78 640z" fill="#7aa9ec" />
      <path d="M72 634L112 625L140 690L102 700z" fill="url(#shaft)" />
      <path d="M150 615L172 668M112 630L134 686" stroke="#ffe25a" strokeWidth="6" />
    </g>
  );
  return (
    <g>
      <path d="M190 560H1075L1040 655H240z" fill="#ab7e10" />
      <path d="M190 565L250 560V640L215 650zM1030 565H1070L1040 640L1012 640z" fill="#3e2d04" />
      <path d="M540 650Q633 644 735 654V566H540z" fill="#bd8c12" />
      {half}
      <g transform="matrix(-1 0 0 1 1265 0)">{half}</g>
      <path d="M548 500L575 457H688L715 500V562H548z" fill="#1e2c3c" stroke="#86b3e8" strokeWidth="3" />
      <path d="M590 462H676V516H590z" fill="#4a6898" />
      <path d="M588 516H678V550H588z" fill="#a6e2f8" />
      <path d="M560 550H705V562H560z" fill="#4c8ed0" />
      <path d="M588 457L588 516M678 457V516" stroke="#86b3e8" strokeWidth="3" />
    </g>
  );
}

function RingHead() {
  return (
    <g transform="translate(870 150) scale(.33333)">
      <RedGallery />
      <CenterStone />
      <path d="M347 70L404 430Q450 470 496 430L440 70z" fill="url(#shaft)" />
      <path d="M916 70L860 430Q820 470 766 430L824 70z" fill="url(#shaft)" />
      <path d="M348 72C346 20 440 20 440 72zM824 72C824 20 916 20 916 72z" fill="#d09a1c" />
      <ellipse cx="396" cy="52" rx="24" ry="14" fill="#f0c244" />
      <ellipse cx="872" cy="52" rx="24" ry="14" fill="#f0c244" />
      <ellipse cx="398" cy="48" rx="10" ry="6" fill="#ffe680" />
      <ellipse cx="874" cy="48" rx="10" ry="6" fill="#ffe680" />
      <path d="M346 72H441M822 72H918" stroke="#f9bd48" strokeWidth="5" />
      {BACK_PINS.map((p) => <Pin key={`${p.x}-${p.y}`} {...p} />)}
      <SideStones />
      {FRONT_PINS.map((p) => <Pin key={`${p.x}-${p.y}`} {...p} />)}
      <path d="M258 600H550V670L440 690L340 702L262 680z" fill="#8f680c" />
      <path d="M716 590H1012V680L930 702L820 698L716 665z" fill="#8f680c" />
      <Cup x={280} y={592} w={32} h={88} />
      <Cup x={512} y={590} w={36} h={82} />
      <Cup x={322} y={614} w={36} h={82} />
      <Cup x={412} y={612} w={40} h={82} />
      <Cup x={756} y={590} w={38} h={80} />
      <Cup x={978} y={590} w={34} h={90} />
      <Cup x={852} y={612} w={40} h={84} />
      <Cup x={942} y={612} w={34} h={84} />
      {SMALL_PINS.map((p) => <Pin key={`${p.x}-${p.y}`} {...p} />)}
      <path d="M100 700L240 650M1165 700L1010 648M585 652Q650 645 720 660" fill="none" stroke="#ffb53c" strokeWidth="4" />
    </g>
  );
}

const BAND_STONES = [92, 122, 180, 245, 320, 405, 505];
const BAND_BEADS = [74, 96, 132, 188, 262, 344, 444, 542];

function PaveColumn({ x }: { x: number }) {
  return (
    <g>
      <path d={`M${x - 60} 75V560H${x + 60}V75z`} fill="#4a5a50" />
      <path d={`M${x - 30} 75H${x + 30}V560H${x - 30}z`} fill="#7eaeee" />
      {BAND_STONES.map((y, i) => (
        <g key={y}>
          <ellipse cx={x} cy={y} rx="56" ry={14 + i * 7} fill="#79a8ea" stroke="#a5a89a" strokeWidth="3" />
          <ellipse cx={x} cy={y - 14} rx="24" ry={5 + i * 2} fill="#5f8bd2" />
          <path d={`M${x + 28} ${y - 12}l14 8M${x + 36} ${y + 2}l8 6M${x - 44} ${y - 6}l10-6`} stroke="#30507f" strokeWidth="4" />
        </g>
      ))}
      {BAND_BEADS.map((y) => (
        <g key={y}>
          <circle cx={x - 35} cy={y} r="20" fill="url(#bead)" />
          <circle cx={x + 35} cy={y} r="20" fill="url(#bead)" />
        </g>
      ))}
      <path d={`M${x - 18} 336l12-6v18zM${x - 18} 428l12-6v14z`} fill="#fff" />
    </g>
  );
}

function RingBand() {
  return (
    <g>
      <path d="M1017 595H1145C1144 700 1136 790 1118 929H1044C1026 790 1019 700 1017 595z" fill="url(#band)" />
      <path d="M1061 594H1101V929H1061z" fill="url(#bandMid)" />
      <path d="M1017 445V595C1019 700 1026 790 1044 929M1145 445V595C1143 700 1136 790 1117 929M1060 594V929M1101 594V929" fill="none" stroke="#efae38" strokeWidth="1.700" />
      <g transform="translate(990 410) scale(.33333)">
        <path d="M78 105H90V560H78zM202 105H210V560H202zM337 105H344V560H337zM454 105H466V560H454z" fill="#d89a1c" />
        <PaveColumn x={146} />
        <PaveColumn x={398} />
        <path d="M207 42L337 42V552H207z" fill="#d99b18" />
        <path d="M216 92V80Q225 67 245 67H300Q322 67 330 80V92z" fill="#88b4e0" />
        <path d="M242 72H306V90H242z" fill="#46648c" />
        <path d="M216 200V145Q225 134 245 134H300Q322 134 330 148V200z" fill="#77a5e8" />
        <path d="M243 138H304V200H243z" fill="#5b85c8" />
        <path d="M215 116H331V134H215zM215 238H331V256H215zM215 403H331V418H215z" fill="#806010" />
        <path d="M216 356V268Q225 254 240 254H310Q326 254 330 268V356z" fill="#7aa8ec" />
        <path d="M244 258H304V356H244z" fill="#6c97dc" />
        <path d="M216 550V430Q222 415 240 415H312Q326 415 330 430V550z" fill="#7dadf0" />
        <path d="M308 142H322V200H308zM308 262H324V356H308zM308 422H324V548H308z" fill="#2e425e" />
        <path d="M236 136V200M236 256V356M236 418V550M304 136V200M304 256V356M304 418V550" stroke="#9cc8fa" strokeWidth="3" />
        <path d="M210 44H336M210 96H336M210 114H336M210 202H336M210 237H336M210 358H336M210 402H336M80 560H210M336 560H464M210 42V552M336 42V552" stroke="#ffbe46" strokeWidth="4" />
      </g>
    </g>
  );
}

function Scene() {
  return (
    <svg viewBox="308 143 1604 889" className="h-full w-full" role="img" aria-label="Ring, right view">
      <defs>
        <linearGradient id="shaft">
          <stop offset="0" stopColor="#b5820f" />
          <stop offset=".35" stopColor="#e8aa22" />
          <stop offset=".65" stopColor="#c08a12" />
          <stop offset="1" stopColor="#513a05" />
        </linearGradient>
        <radialGradient id="bead" cx=".45" cy=".35" r=".65">
          <stop offset="0" stopColor="#ffe680" />
          <stop offset=".3" stopColor="#e0a526" />
          <stop offset=".7" stopColor="#a8790f" />
          <stop offset="1" stopColor="#4a3504" />
        </radialGradient>
        <linearGradient id="red" x1="0" y1="0" x2=".2" y2="1">
          <stop offset="0" stopColor="#8a0008" />
          <stop offset=".5" stopColor="#ea000e" />
          <stop offset="1" stopColor="#6a0006" />
        </linearGradient>
        <linearGradient id="band" gradientUnits="userSpaceOnUse" x1="0" y1="595" x2="0" y2="915">
          <stop offset="0" stopColor="#f8cc40" />
          <stop offset=".06" stopColor="#fdf062" />
          <stop offset=".16" stopColor="#ffff86" />
          <stop offset=".24" stopColor="#fffa60" />
          <stop offset=".3" stopColor="#fbbf38" />
          <stop offset=".4" stopColor="#d39814" />
          <stop offset=".6" stopColor="#aa7c10" />
          <stop offset=".82" stopColor="#59400a" />
          <stop offset="1" stopColor="#000" />
        </linearGradient>
        <linearGradient id="bandMid" gradientUnits="userSpaceOnUse" x1="0" y1="594" x2="0" y2="912">
          <stop offset="0" stopColor="#fff27c" />
          <stop offset=".1" stopColor="#ffff88" />
          <stop offset=".17" stopColor="#fffa62" />
          <stop offset=".25" stopColor="#fcc038" />
          <stop offset=".38" stopColor="#d89c16" />
          <stop offset=".6" stopColor="#ac7e10" />
          <stop offset=".82" stopColor="#5c430a" />
          <stop offset="1" stopColor="#000" />
        </linearGradient>
      </defs>
      <RingBand />
      <RingHead />
      <g stroke="#e8e8e8" strokeWidth="1.500">
        <path d="M1044 935V998M1117 935V998M1044 986H1117" />
        <path d="M1045 986l23-6v12zM1116 986l-23-6v12z" fill="#fff" />
      </g>
      <text x="1036" y="981" fontSize="48" fill="#fff" fontFamily="Liberation Sans">3.15</text>
      <path d="M345 965V994" stroke="#b08d4c" strokeWidth="1.500" />
      <path d="M345 994H375" stroke="#3b7f88" strokeWidth="1.500" />
      <text x="347" y="967" fontSize="13" fill="#c8b088" fontFamily="DejaVu Sans Mono">z</text>
      <text x="377" y="998" fontSize="13" fill="#4a93a0" fontFamily="DejaVu Sans Mono">y</text>
      <g fill="none" strokeWidth="1.300">
        <path d="M1859 157L1864 154H1875L1878 157L1871 162H1866zM1859 157H1878M1866 154V162M1872 154V162" stroke="#4c69b0" />
        <path d="M1871 162L1863 167L1868 184V201Q1871 205 1874 201V184L1878 167zM1863 170H1878M1868 184H1874" stroke="#d8a45c" />
      </g>
    </svg>
  );
}

/* ---------- work area ---------- */

const VIEWS = ['Perspective', 'Top', 'Front', 'Right'];

function WorkArea() {
  return (
    <main className="flex min-w-0 flex-1 flex-col border-[7px] border-r-8 border-b-8 border-l-8 border-[#adb1b3] bg-[#a9d7e5] text-[13px] text-[#123]">
      <div className="mt-[3px] flex h-[62px] bg-[#3cb7e2]">
        <div className="mr-0.5 w-[5px] border-r border-l-2 border-r-[#1d4654] border-l-[#a9d7e5] bg-[#7cc6df]" />
        <div className="flex min-w-0 flex-1 flex-col">
          <div className="h-[42px] border-b border-[#12485c] leading-4">
            <p>Second dimension point:</p>
            <p className="whitespace-pre">Dimension location ( Vertical  Horizontal ):</p>
          </div>
          <label className="flex h-[19px] items-center">
            <b className="font-bold">Command:</b>
            <input type="text" className="ml-1 flex-1 bg-transparent outline-none" />
          </label>
        </div>
        <div className="flex w-[17px] flex-col items-center bg-[#f0f0f0] text-[#444]">
          <ChevronUp className="mt-1 h-3 w-3" strokeWidth={3} />
          <ChevronDown className="mt-auto mb-0.5 h-3 w-3" strokeWidth={3} />
          <button aria-label="Previous command" className="flex h-[9px] w-[14px] items-center justify-center border border-[#999]"><svg viewBox="0 0 6 4" className="h-1 w-1.5"><path d="M0 4l3-4 3 4z" /></svg></button>
          <button aria-label="Next command" className="mt-px flex h-[9px] w-[14px] items-center justify-center border border-[#999]"><svg viewBox="0 0 6 4" className="h-1 w-1.5"><path d="M0 0l3 4 3-4z" /></svg></button>
        </div>
      </div>
      <nav className="mt-[7px] flex h-5 items-start text-[12px]">
        {VIEWS.map((v) => (
          <button
            key={v}
            className={clsx(
              'relative h-[19px] rounded-tr-[5px] border border-b-0 border-l-0 border-[#3c5560] pr-1 pl-[10px] leading-4 [clip-path:polygon(8px_0,100%_0,100%_100%,0_100%)]',
              v === 'Right' ? 'bg-[#3cb7e2]' : 'bg-[#d4e8ee]'
            )}
          >
            <svg viewBox="0 0 10 19" className="absolute top-0 left-0 h-[19px] w-2.5" aria-hidden="true"><path d="M0 19L8 1" stroke="#3c5560" /></svg>
            {v}
          </button>
        ))}
        <button aria-label="New view" className="relative flex h-[19px] w-8 items-center justify-center rounded-tr-[5px] border border-b-0 border-l-0 border-[#3c5560] pl-1">
          <svg viewBox="0 0 10 19" className="absolute top-0 left-0 h-[19px] w-2.5" aria-hidden="true"><path d="M0 19L8 0" stroke="#3c5560" /></svg>
          <svg viewBox="0 0 10 10" className="h-2.5 w-2.5" fill="none" aria-hidden="true"><path d="M4 1h2v3h3v2H6v3H4V6H1V4h3z" stroke="#446" /></svg>
        </button>
      </nav>
      <div className="relative min-h-0 flex-1 bg-black">
        <Scene />
        <button className="absolute top-0 left-0 flex h-[19px] w-14 items-center justify-between bg-[#3cb7e2] pl-2 text-[12px]">
          Right
          <span className="flex h-[19px] w-3 items-center justify-center border border-[#1d6c88]"><svg viewBox="0 0 8 5" className="h-[5px] w-2"><path d="M0 0h8L4 5z" fill="#123" /></svg></span>
        </button>
      </div>
    </main>
  );
}

/* ---------- taskbar ---------- */

const APPS: { name: string; icon: ReactNode }[] = [
  { name: 'Start', icon: <path d="M4 6l7-1v7H4zM12 5l8-1v8h-8zM4 13h7v7l-7-1zM12 13h8v8l-8-1z" fill="#fff" /> },
  { name: 'Cortana', icon: <circle cx="12" cy="12" r="6.500" fill="none" stroke="#fff" strokeWidth="2" /> },
  { name: 'Edge', icon: <><circle cx="12" cy="12" r="12" fill="#1473c8" /><path d="M1 8C4-3 22-2 24 10c0 6-6 7-9 5 3-4-1-8-5-7C6 8 2 10 1 8z" fill="#3cc8b8" /><path d="M14 1c7 1 10 6 10 10-1 4-5 5-8 4 3-5 1-10-2-14z" fill="#6fdc70" /><circle cx="13" cy="12" r="3.500" fill="#202226" /><path d="M0 15h12v8H0z" fill="#e07b1c" /><path d="M0 18h12M4 15v-2h4v2" stroke="#8c450a" fill="none" /></> },
  { name: 'Store', icon: <><path d="M7 5V1h11v4" fill="none" stroke="#4b9fd8" strokeWidth="2" /><path d="M1 5h22v16q0 2-2 2H3q-2 0-2-2z" fill="#f2f2f2" /><path d="M8 9h4v4H8z" fill="#c8502c" /><path d="M13 9h4v4h-4z" fill="#6c9a34" /><path d="M8 14h4v4H8z" fill="#2f86c0" /><path d="M13 14h4v4h-4z" fill="#dca626" /></> },
  { name: 'Mail', icon: <><path d="M0 8L12 1l12 7v4H0z" fill="#1b5d9e" /><path d="M0 8h24v14H0z" fill="#2f9be6" /><path d="M2 7h20l-10 9z" fill="#e8f4fd" /><path d="M0 22L24 9v13z" fill="#1f84d2" /></> },
  { name: 'Paint', icon: <><path d="M12 4C4 4 0 10 1 15c1 5 5 3 7 3 3 0 2 4 5 4 6 0 9-5 9-9 0-5-4-9-10-9z" fill="#dfe6ee" /><circle cx="7" cy="11" r="2" fill="#cc4030" /><circle cx="12" cy="8" r="2" fill="#4aa040" /><circle cx="6" cy="15" r="1.500" fill="#3c7ad0" /><path d="M13 21L19 7" stroke="#b87a3c" strokeWidth="2.500" /><path d="M18 8l1-6 5-2-1 7-3 3z" fill="#c9966b" /></> },
  { name: 'Coc Coc', icon: <><circle cx="12" cy="12" r="12" fill="#7bc043" /><circle cx="11" cy="13" r="7" fill="none" stroke="#eef7e4" strokeWidth="2.500" /><circle cx="12" cy="12" r="3" fill="#eef7e4" /><path d="M13 9l1-9M15 10l5-8M16 12l8-5" stroke="#f4e9e0" strokeWidth="2" /><path d="M15 8l2-7M17 10l6-6" stroke="#b04a38" /></> },
  { name: 'Explorer', icon: <><path d="M1 3h8l2 3h12v15H1z" fill="#e8a92c" /><path d="M1 7h22v14H1z" fill="#fcd667" /><path d="M5 21v-8h14v8h-4v-4H9v4z" fill="#5591b8" /></> },
  { name: 'Matrix', icon: <><circle cx="12" cy="12" r="12" fill="#2ea7cf" /><path d="M1 9l4 8 4-8" fill="none" stroke="#e6f6fb" /><circle cx="16" cy="14" r="5" fill="none" stroke="#e6f6fb" /><circle cx="16" cy="5" r="3.500" fill="none" stroke="#e6f6fb" /></> },
];

function TrayIcon({ children, size = 'h-5 w-5' }: { children: ReactNode; size?: string }) {
  return <svg viewBox="0 0 20 20" className={clsx('shrink-0', size)} fill="none" stroke="#f2f2f2" strokeWidth="1.400" aria-hidden="true">{children}</svg>;
}

function Taskbar() {
  return (
    <footer className="flex h-10 items-stretch bg-[#1e1e22] font-['Open_Sans',sans-serif] text-[#f0f0f0]">
      {APPS.map((app) => (
        <button key={app.name} aria-label={app.name} className={clsx('flex w-[49px] items-center justify-center', app.name === 'Matrix' && 'border-b-2 border-[#9fd8f4] bg-[#48484c]')}>
          <svg viewBox="0 0 24 24" className="h-6 w-6" aria-hidden="true">{app.icon}</svg>
        </button>
      ))}
      <div className="ml-auto flex items-center pr-0.5">
        <span className="text-[11px]">Desktop</span>
        <span className="ml-2 self-start text-[16px] leading-[18px]">»</span>
        <div className="ml-[22px]"><TrayIcon><circle cx="13" cy="6" r="3" /><circle cx="7" cy="10" r="2.500" /><path d="M3 18q0-5 4-5t4 5M11 11q6-4 7 3" /></TrayIcon></div>
        <div className="ml-[78px]"><TrayIcon size="h-6 w-6"><path d="M1 4h15v12H1zM16 7h3v9h-3M4 7h9M4 10h4v3H4zM10 10h4M10 13h4" /></TrayIcon></div>
        <span className="ml-2 text-[13px] whitespace-nowrap">30°C</span>
        <span className="ml-2.5 text-[13px] whitespace-nowrap">Mưa nhỏ</span>
        <ChevronUp className="ml-3.5 h-4 w-4" strokeWidth={2} />
        <div className="ml-1.5 flex gap-1">
          <TrayIcon><path d="M6 4h12v9H6M12 13v4M8 17h8M2 4h5v4H2zM4 8v9h4" /></TrayIcon>
          <TrayIcon><path d="M3 13q-4-5 2-6 3-6 8-1 5 0 4 7z" fill="#2277bd" stroke="none" /><circle cx="13" cy="13" r="5" fill="#8bb9dc" /><path d="M11 12h4l-1-2M15 14h-4l1 2" strokeWidth="1" /></TrayIcon>
          <TrayIcon><path d="M2 8h3l4-4v12l-4-4H2zM12 8l5 5M17 8l-5 5" /></TrayIcon>
        </div>
        <div className="ml-2.5"><TrayIcon><path d="M2 15q2-6 6-4t-1 6q-4 1 2-6l5-8q4-1 2 3l-5 8q4-6 7-4" /></TrayIcon></div>
        <div className="ml-2.5"><TrayIcon size="h-6 w-6"><path d="M1 5h18v10H1z" /><path d="M3 8h14M3 10h14" strokeDasharray="1 1" /><path d="M5 13h10" /></TrayIcon></div>
        <div className="ml-2 text-center text-[11px] leading-[18px] whitespace-nowrap"><div>3:48 PM</div><div>11/16/2023</div></div>
        <button aria-label="Notifications" className="relative ml-3 h-6 w-8">
          <svg viewBox="0 0 20 20" className="h-5 w-5" aria-hidden="true"><path d="M2 2h16v12H9l-3 4v-4H2z" fill="#fff" /><path d="M5 6h10M5 9h10" stroke="#1e1e22" /></svg>
          <span className="absolute right-1 -bottom-1 flex h-4 w-4 items-center justify-center rounded-full border border-[#999] bg-[#3a3a3e] text-[11px]">3</span>
        </button>
        <div className="ml-1.5 h-10 w-px bg-[#5b5b60]" />
      </div>
    </footer>
  );
}

export default function App() {
  return (
    <div className="flex min-h-screen flex-col bg-[#333] font-['Open_Sans',sans-serif]">
      <header className="flex h-[23px] items-center bg-white pl-0.5 text-[12px] text-[#8a8a8a]">
        <svg viewBox="0 0 16 16" className="h-4 w-4" aria-hidden="true"><circle cx="8" cy="8" r="8" fill="#2a9fc8" /><path d="M3 3q5 4 4 10M8 6a3 3 0 1 1 0 6" fill="none" stroke="#a8dcee" /></svg>
        <h1 className="ml-[5px] flex-1 text-[11px]">Matrix 8.0 (64-bit) - 7491.3dm</h1>
        <div className="flex gap-[34px] pr-[18px]">
          <button aria-label="Minimize"><Minus className="h-3 w-3" strokeWidth={2} /></button>
          <button aria-label="Restore"><Copy className="h-3 w-3 -scale-y-100" strokeWidth={2} /></button>
          <button aria-label="Close"><X className="h-3.5 w-3.5" strokeWidth={2} /></button>
        </div>
      </header>
      <nav className="flex h-[21px] items-center gap-[11px] bg-[#e8e8e8] pt-0.5 pl-1.5 font-['Liberation_Sans'] text-[11px] text-black">
        {MENUS.map((m) => <button key={m}>{m}</button>)}
      </nav>
      <div className="flex flex-1">
        <Sidebar />
        <WorkArea />
      </div>
      <Taskbar />
    </div>
  );
}
